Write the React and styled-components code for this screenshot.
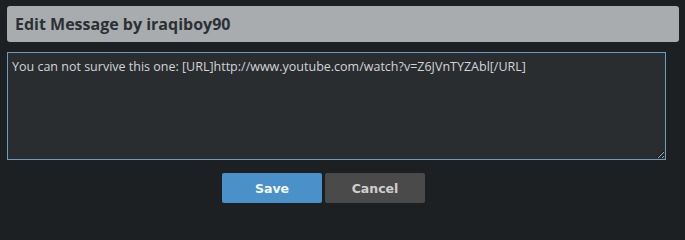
import React from "react";
import styled, { createGlobalStyle } from "styled-components";

const GlobalStyle = createGlobalStyle`
  html, body {
    margin: 0;
    padding: 0;
    background: #1d2023;
  }
`;

const Page = styled.div`
  width: 685px;
  height: 207px;
  box-sizing: border-box;
  padding: 6px 6px 0 7px;
  background: #1d2023;
  font-family: "Open Sans", "Liberation Sans", sans-serif;
`;

const Heading = styled.h2`
  margin: 0;
  height: 36px;
  box-sizing: border-box;
  padding: 0 8px;
  display: flex;
  align-items: center;
  background: #a8acae;
  border-radius: 3px;
  color: #2b3034;
  font-size: 16px;
  font-weight: 700;
`;

const Editor = styled.textarea`
  display: block;
  margin: 10px 0 0;
  width: 659px;
  height: 108px;
  box-sizing: border-box;
  padding: 5px 4px;
  background: #2a2d30;
  border: 1px solid #6b9dc0;
  border-radius: 0;
  color: #d2d4d6;
  font-family: "Open Sans", "Liberation Sans", sans-serif;
  font-size: 12.5px;
  line-height: 17px;
  resize: vertical;
  outline: none;
`;

const Actions = styled.div`
  display: flex;
  gap: 3px;
  margin: 13px 0 0 215px;
`;

const Button = styled.button`
  width: 100px;
  height: 30px;
  border: none;
  border-radius: 2px;
  background: ${(p) => (p.$primary ? "#4a91c9" : "#4a4a4a")};
  color: ${(p) => (p.$primary ? "#f4f8fb" : "#cfcfcf")};
  font-family: "DejaVu Sans", "Liberation Sans", sans-serif;
  font-size: 12.5px;
  font-weight: 700;
  cursor: pointer;
`;

export default function App() {
  return (
    <>
      <GlobalStyle />
      <Page>
        <Heading>Edit Message by iraqiboy90</Heading>
        <Editor
          defaultValue="You can not survive this one: [URL]http://www.youtube.com/watch?v=Z6JVnTYZAbl[/URL]"
          spellCheck={false}
        />
        <Actions>
          <Button $primary>Save</Button>
          <Button>Cancel</Button>
        </Actions>
      </Page>
    </>
  );
}
